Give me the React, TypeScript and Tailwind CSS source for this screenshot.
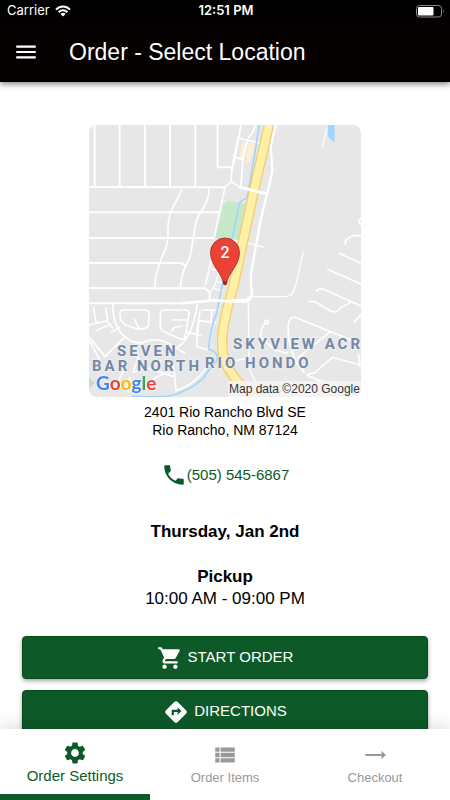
import {
  MdDirections,
  MdMenu,
  MdPhone,
  MdSettings,
  MdShoppingCart,
  MdTrendingFlat,
  MdViewList,
} from "react-icons/md";

function StatusBar() {
  return (
    <div className="grid h-[22px] grid-cols-3 items-center bg-black pr-[5px] pl-[7px] font-['Inter',sans-serif] text-[13px] text-white">
      <div className="flex items-center gap-[5px]">
        <span>Carrier</span>
        <svg width="16" height="12" viewBox="0 0 16 12" aria-label="Wi-Fi">
          <g fill="none" stroke="#fff" strokeWidth="2">
            <path d="M1 4.6C5 .4 11 .4 15 4.6" />
            <path d="M3.6 7.2C6 4.7 10 4.7 12.4 7.2" />
          </g>
          <path d="M8 11.5 5.4 8.9Q8 6.8 10.6 8.9Z" fill="#fff" />
        </svg>
      </div>
      <span className="text-center font-semibold">12:51 PM</span>
      <svg className="justify-self-end" width="29" height="13" viewBox="0 0 29 13" aria-label="Battery">
        <rect x=".5" y=".5" width="25" height="11.5" rx="3" fill="none" stroke="#8c8c8c" />
        <rect x="2" y="2" width="15.5" height="8.5" rx="1" fill="#fff" />
        <path d="M27 4.3q1.8 2 0 4z" fill="#8c8c8c" />
      </svg>
    </div>
  );
}

function LocationMap() {
  return (
    <svg
      className="rounded-lg"
      width="272"
      height="272"
      viewBox="0 0 272 272"
      role="img"
      aria-label="Map of the store location"
    >
      <rect width="272" height="272" fill="#e7e7e7" />
      <g transform="translate(-4 -5) scale(.3333)">
        <path d="M414 258 426 243 486 251 462 360 390 355Z" fill="#c5e8c8" />
        <path d="M0 762 28 790 0 820Z" fill="#b9e2bd" />
        <path d="M472 65 486 67 478 118 463 115ZM490 68 510 72 494 128 484 125Z" fill="#fdf0cf" />
        <path d="M730 15H749V66Q728 58 728 38Z" fill="#a3d5fb" />
        <g fill="none" stroke="#fff" strokeLinejoin="round">
          <path
            strokeWidth="6"
            d="M29 15V198M104 15V198M180 15V198M255 15V198M331 15V198M398 15V142H438M12 201 420 202M12 277H402M12 354H390M12 429H283Q293 430 302 437M12 504 210 505H360L374 516V540M12 550H300"
          />
          <path
            strokeWidth="5"
            d="M290 205C290 225 258 260 254 288C246 315 250 345 248 362C246 385 230 410 224 432Q210 465 210 503M372 205C374 245 350 268 338 293C326 320 330 340 323 362C320 390 318 412 303 436C288 465 290 480 286 503M420 202 388 352M382 410 361 495M419 202 440 185 466 203 550 222M438 190 440 145 468 15M438 170 461 55 469 15M510 15Q506 38 492 50L487 66Q472 112 472 145L467 200M466 56 532 71M450 112 474 119"
          />
          <path
            strokeWidth="7"
            d="M572 15 557 80 562 150C555 200 530 270 518 350Q506 415 500 450 495 470 500 510Q504 540 482 545"
          />
          <path
            strokeWidth="4"
            d="M437 359 538 381M725 25 712 84M655 394 645 440Q635 490 626 512 620 530 600 530H500M490 545 492 735Q495 765 520 795M378 448 403 452 388 500 374 518M401 455 418 459M395 485 419 490M388 505 415 514"
          />
          <path
            strokeWidth="5"
            d="M110 570H182Q194 572 193 588L191 615Q188 626 174 626L158 628 121 615Q103 603 105 580 106 571 110 570ZM237 570H304Q314 572 312 582L300 653Q297 661 286 657L232 632Q224 627 226 612V583Q227 571 237 570ZM148 597 163 627M260 600H307M258 635 268 622 294 618M84 551C83 590 90 628 120 650Q150 680 190 662 230 652 265 680L300 700M338 551C325 620 312 668 264 690M25 560 34 610M62 562 68 603M12 615 66 603 84 625M12 650 60 710 118 652M32 632 78 612M12 660 45 720M302 635 350 648M78 637 106 622M403 570H350M396 608 342 602 334 680 370 690M380 572 376 660 368 688M345 572 335 640M160 700Q160 720 144 757L190 745 265 770M178 810Q195 770 258 757M265 732 273 812Q330 795 366 740M226 720 220 742M136 772Q125 790 130 818M95 795 115 755"
          />
          <path
            strokeWidth="5"
            d="M828 293 822 305 828 315M828 348C805 342 775 355 782 375M762 400 828 430M727 448 828 492M694 515Q700 505 714 507L788 540Q802 548 783 555 760 565 755 576 735 576 712 558L690 545H670M783 538 828 558M807 608 828 583M540 608A5 6 0 1 0 543 601A5 6 0 0 0 540 608ZM540 608Q522 635 530 655L570 690 608 700M660 760 636 730Q605 665 610 615 612 590 630 592L828 672M735 636 637 716M665 764 690 758 742 712 828 736M665 764Q680 778 775 800M820 700 825 740M450 722 485 715"
          />
        </g>
        <path
          d="M523 15 508 110 490 215Q488 238 474 240 462 246 461 260L438 375 412 495 395 580 380 620 370 688Q402 695 396 722 370 750 355 775 310 815 250 829 200 832 140 829"
          fill="none"
          stroke="#a3d5fb"
          strokeWidth="5"
        />
        <g fill="none">
          <path d="M554 5 505 220 445 500C410 620 398 690 430 745Q465 805 530 850" stroke="#f3cb62" strokeWidth="31" />
          <path d="M554 5 505 220 445 500C410 620 398 690 430 745Q465 805 530 850" stroke="#ffefa7" strokeWidth="24" />
          <path d="M424 755Q445 800 500 832" stroke="#f6d679" strokeWidth="3" />
          <path d="M285 550 385 541 480 546M440 541H482L497 530" stroke="#fff" strokeWidth="8" />
          <path d="M462 201 547 222" stroke="#fff" strokeWidth="9" />
        </g>
      </g>
      <g
        className="font-['Roboto',sans-serif] text-[15px] font-bold tracking-[3px]"
        fill="#7488a5"
        stroke="#eeeff1"
        strokeWidth="2"
        strokeLinejoin="round"
        paintOrder="stroke"
      >
        <text x="28" y="231">SEVEN</text>
        <text x="3" y="246">BAR NORTH</text>
        <text x="116" y="243">RIO HONDO</text>
        <text x="144" y="224">SKYVIEW ACR</text>
      </g>
      <text x="7" y="265" className="font-['Lato',sans-serif] text-[19px] font-bold drop-shadow-[0_0_1px_white]">
        <tspan fill="#4285f4">G</tspan>
        <tspan fill="#ea4335">o</tspan>
        <tspan fill="#fbbc05">o</tspan>
        <tspan fill="#4285f4">g</tspan>
        <tspan fill="#34a853">l</tspan>
        <tspan fill="#ea4335">e</tspan>
      </text>
      <rect x="139" y="256" width="133" height="16" fill="#f5f5f5" fillOpacity=".85" />
      <text x="140" y="268" className="font-['Liberation_Sans',sans-serif] text-[12px]" fill="#333">
        Map data ©2020 Google
      </text>
      <path
        d="M134.500 159C133.500 148 121.500 141 121.500 127.500A14.500 14.500 0 0 1 150.500 127.500C150.500 141 138.500 148 137.500 159Q136 161 134.500 159Z"
        fill="#ea4335"
        stroke="#a5281f"
        strokeWidth=".8"
      />
      <circle cx="136" cy="158" r="2" fill="#a5281f" />
      <text x="136" y="133" textAnchor="middle" className="font-['Roboto',sans-serif] text-[16px] font-medium" fill="#fff">
        2
      </text>
    </svg>
  );
}

const actionClass =
  "flex h-[43px] w-full items-center justify-center gap-[5px] rounded border border-[#084a1a] bg-[#0d5a28] text-[15px] text-white shadow-[0_2px_4px_rgba(0,0,0,0.35)]";

export default function App() {
  return (
    <div className="flex h-screen flex-col bg-white font-['Liberation_Sans',Arial,sans-serif] text-black">
      <header className="relative z-10 shrink-0 shadow-[0_2px_6px_rgba(0,0,0,0.5)]">
        <StatusBar />
        <div className="flex h-[60px] items-center gap-[30px] bg-[#050100] px-[13px] text-white">
          <button type="button" aria-label="Menu">
            <MdMenu size={26} />
          </button>
          <h1 className="text-[23px]">Order - Select Location</h1>
        </div>
      </header>

      <main className="flex min-h-0 flex-1 flex-col items-center overflow-y-auto px-[22px] pt-[43px] [scrollbar-width:none]">
        <div className="shrink-0">
          <LocationMap />
        </div>
        <address className="mt-[6px] text-center text-[14px] leading-[18px] not-italic">
          2401 Rio Rancho Blvd SE
          <br />
          Rio Rancho, NM 87124
        </address>
        <a href="tel:5055456867" className="mt-[23px] flex items-center text-[15px] leading-[26px] text-[#0d5a28]">
          <MdPhone size={26} />
          (505) 545-6867
        </a>
        <h2 className="mt-[33px] text-[17px] leading-[22px] font-bold">Thursday, Jan 2nd</h2>
        <h3 className="mt-[23px] text-[17px] leading-[22px] font-bold">Pickup</h3>
        <p className="text-[17px] leading-[22px]">10:00 AM - 09:00 PM</p>
        <div className="mt-[26px] flex w-full shrink-0 flex-col gap-[11px] pb-4">
          <button type="button" className={actionClass}>
            <MdShoppingCart size={26} />
            START ORDER
          </button>
          <button type="button" className={actionClass}>
            <MdDirections size={26} />
            DIRECTIONS
          </button>
        </div>
      </main>

      <nav className="relative z-10 grid h-[71px] shrink-0 grid-cols-3 bg-white text-[13px] text-[#999] shadow-[0_-4px_16px_rgba(0,0,0,0.12)]">
        <button
          type="button"
          aria-current="page"
          className="flex flex-col items-center border-b-[6px] border-[#0d5a28] pt-[11px] text-[15px] leading-[20px] text-[#0d5a28]"
        >
          <MdSettings size={26} />
          Order Settings
        </button>
        <button type="button" className="flex flex-col items-center pt-[13px] leading-[20px]">
          <MdViewList size={26} />
          Order Items
        </button>
        <button type="button" className="flex flex-col items-center pt-[13px] leading-[20px]">
          <MdTrendingFlat size={26} />
          Checkout
        </button>
      </nav>
    </div>
  );
}
